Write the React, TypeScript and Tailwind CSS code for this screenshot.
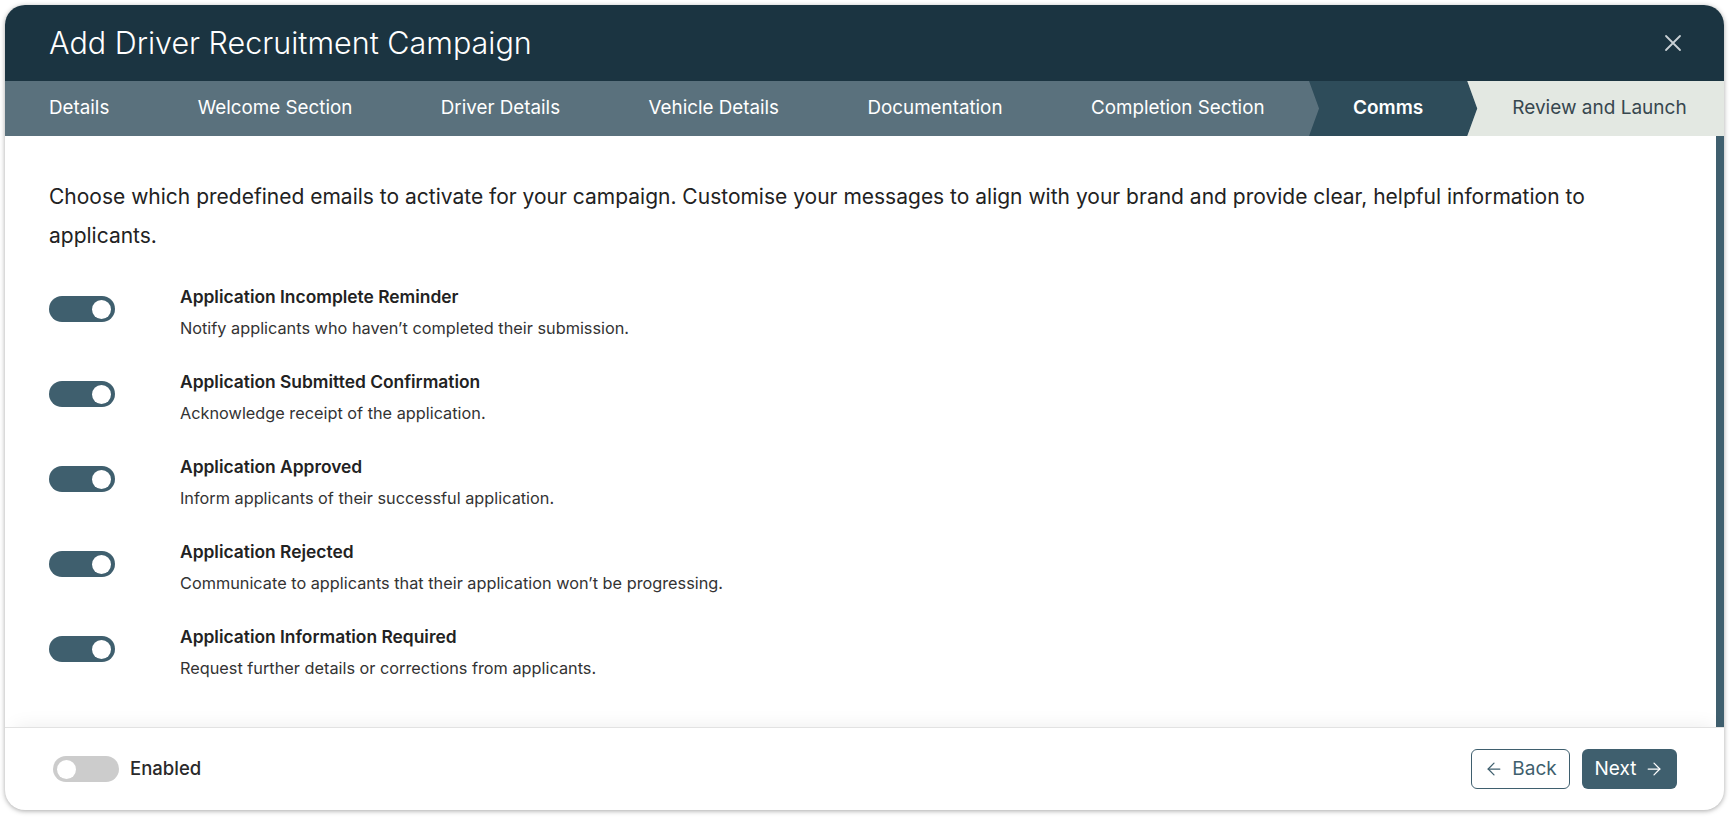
import { ArrowLeft, ArrowRight } from 'lucide-react';
import clsx from 'clsx';

type Step = {
  label: string;
  state: 'done' | 'active' | 'todo';
};

const steps: Step[] = [
  { label: 'Details', state: 'done' },
  { label: 'Welcome Section', state: 'done' },
  { label: 'Driver Details', state: 'done' },
  { label: 'Vehicle Details', state: 'done' },
  { label: 'Documentation', state: 'done' },
  { label: 'Completion Section', state: 'done' },
  { label: 'Comms', state: 'active' },
  { label: 'Review and Launch', state: 'todo' },
];

const emails = [
  {
    title: 'Application Incomplete Reminder',
    text: 'Notify applicants who haven’t completed their submission.',
  },
  {
    title: 'Application Submitted Confirmation',
    text: 'Acknowledge receipt of the application.',
  },
  {
    title: 'Application Approved',
    text: 'Inform applicants of their successful application.',
  },
  {
    title: 'Application Rejected',
    text: 'Communicate to applicants that their application won’t be progressing.',
  },
  {
    title: 'Application Information Required',
    text: 'Request further details or corrections from applicants.',
  },
];

function Toggle({ on }: { on: boolean }) {
  return (
    <span
      className={clsx(
        'flex h-[26px] w-[66px] shrink-0 items-center rounded-full px-[4px]',
        on ? 'justify-end bg-[#3f5f6e]' : 'justify-start bg-[#cccccc]',
      )}
    >
      <span className="h-[19px] w-[19px] rounded-full bg-white" />
    </span>
  );
}

function StepTab({ step }: { step: Step }) {
  if (step.state === 'active') {
    return (
      <div className="flex h-full items-center bg-[#2e4c5a] pl-[44px] pr-[54px] text-[19px] font-semibold whitespace-nowrap text-white [clip-path:polygon(0_0,calc(100%_-_10px)_0,100%_50%,calc(100%_-_10px)_100%,0_100%,10px_50%)]">
        {step.label}
      </div>
    );
  }
  if (step.state === 'todo') {
    return (
      <div className="-ml-[10px] flex h-full flex-1 items-center bg-[#e3e8e2] pl-[45px] text-[19px] whitespace-nowrap text-[#37474f] [clip-path:polygon(0_0,100%_0,100%_100%,0_100%,10px_50%)]">
        {step.label}
      </div>
    );
  }
  return (
    <div className="flex h-full items-center pl-[44px] pr-[44.5px] text-[18.8px] whitespace-nowrap text-white">
      {step.label}
    </div>
  );
}

export default function App() {
  return (
    <div className="h-[821px] w-[1735px] bg-white pl-[5px] pt-[5px] font-['Inter',sans-serif] text-[#222]">
      <div className="flex h-[805px] w-[1719px] flex-col overflow-hidden rounded-[20px] bg-white shadow-[0_1px_5px_rgba(0,0,0,0.35)]">
        <header className="flex h-[76px] shrink-0 items-center justify-between bg-[#1b3441] pl-[44px] pr-[42px]">
          <h1 className="text-[30.5px] font-light text-white">Add Driver Recruitment Campaign</h1>
          <button className="text-[#c9d1d5]" aria-label="Close">
            <svg width="18" height="18" viewBox="0 0 18 18" fill="none" stroke="currentColor" strokeWidth="1.8" strokeLinecap="round">
              <path d="M2 2l14 14M16 2L2 16" />
            </svg>
          </button>
        </header>

        <nav className="flex h-[55px] shrink-0 bg-[#5a717d]">
          {steps.map((s) => (
            <StepTab key={s.label} step={s} />
          ))}
        </nav>

        <div className="flex min-h-0 flex-1">
          <main className="flex-1 pl-[44px] pr-[110px] pt-[41px]">
            <p className="text-[21px] leading-[39px] text-[#222]">
              Choose which predefined emails to activate for your campaign. Customise your messages to align with your brand and provide clear, helpful information to applicants.
            </p>
            <ul className="mt-[30px] flex flex-col gap-[30px]">
              {emails.map((e) => (
                <li key={e.title} className="flex items-start">
                  <div className="mt-[11px] w-[131px]">
                    <Toggle on />
                  </div>
                  <div>
                    <div className="text-[17.4px] font-semibold leading-6 text-[#222]">{e.title}</div>
                    <div className="mt-[7px] text-[16.3px] leading-6 text-[#333]">{e.text}</div>
                  </div>
                </li>
              ))}
            </ul>
          </main>
          <div className="w-[8px] bg-[#3f5f6e]" />
        </div>

        <footer className="flex h-[83px] shrink-0 items-center justify-between border-t border-[#e2e2e2] pl-[48px] pr-[47px] shadow-[0_-10px_18px_-10px_rgba(0,0,0,0.08)]">
          <div className="flex items-center gap-[11px]">
            <Toggle on={false} />
            <span className="text-[18.5px] font-medium text-[#2a2a2a]">Enabled</span>
          </div>
          <div className="flex items-center gap-[12px]">
            <button className="flex h-[40px] w-[99px] items-center justify-center gap-[8px] rounded-[6px] border border-[#3f5f6e] text-[19px] text-[#3f5f6e]">
              <ArrowLeft size={20} strokeWidth={1.5} />
              Back
            </button>
            <button className="flex h-[40px] w-[95px] items-center justify-center gap-[8px] rounded-[6px] bg-[#3f5f6e] text-[19px] text-white">
              Next
              <ArrowRight size={20} strokeWidth={1.5} />
            </button>
          </div>
        </footer>
      </div>
    </div>
  );
}
